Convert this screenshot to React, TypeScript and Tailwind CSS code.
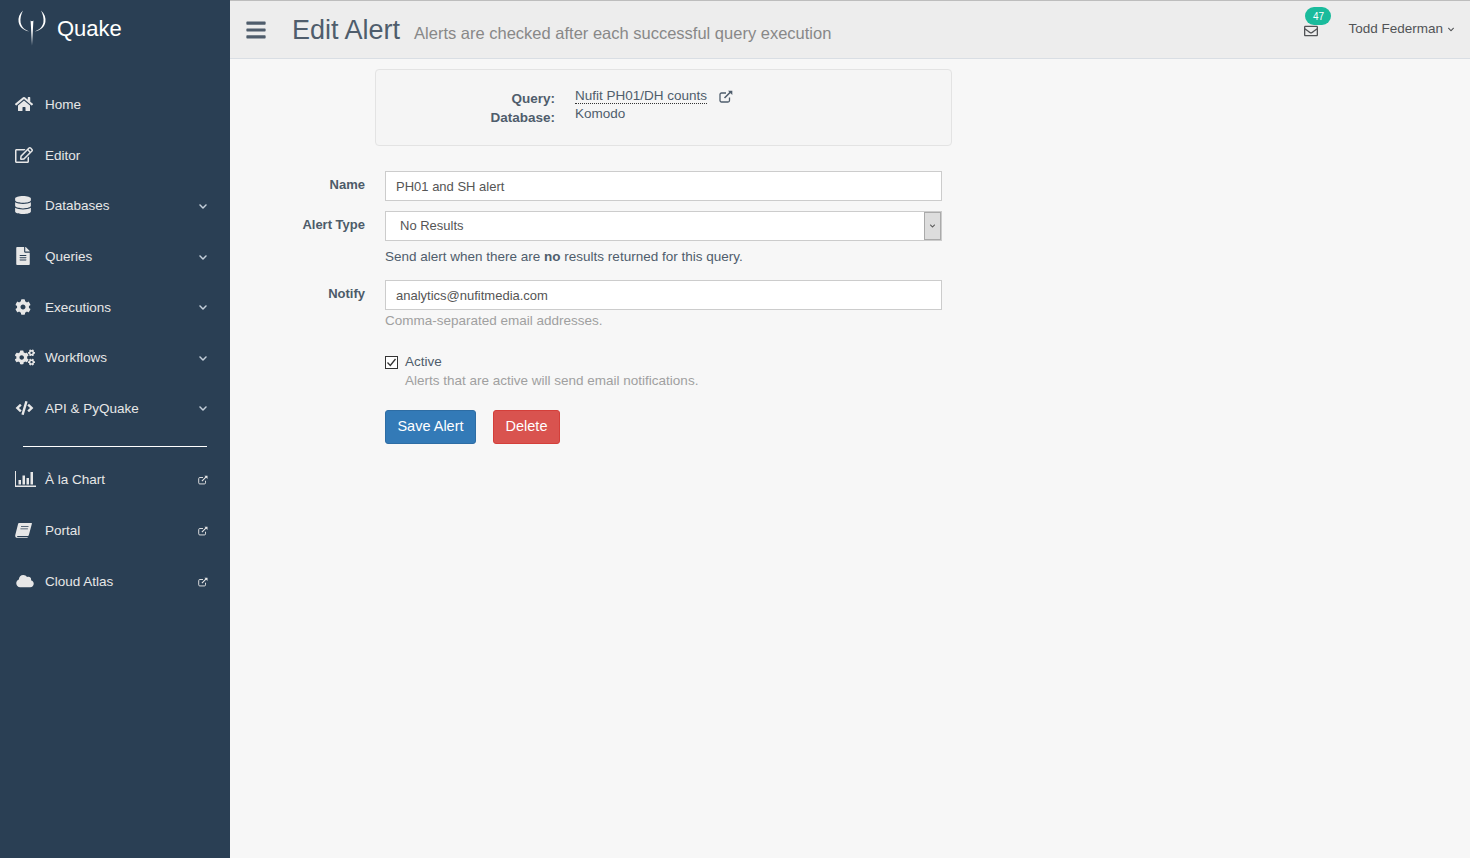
import { ReactNode } from "react";
import {
  FaBars,
  FaChevronDown,
  FaCloud,
  FaCode,
  FaCog,
  FaCogs,
  FaDatabase,
  FaFileAlt,
  FaHome,
  FaRegEdit,
  FaRegEnvelope,
} from "react-icons/fa";

function ExternalIcon({ className }: { className: string }) {
  return (
    <svg viewBox="0 0 14 13" fill="none" stroke="currentColor" className={className}>
      <path d="M10.5 7.5v3a1.5 1.5 0 0 1-1.5 1.5H2.5A1.5 1.5 0 0 1 1 10.5V4.5A1.5 1.5 0 0 1 2.5 3H7" strokeWidth="1.3" />
      <path d="M5.5 8 L12 1.5" strokeWidth="1.6" />
      <path d="M9 .7h4.3V5z" fill="currentColor" stroke="none" />
    </svg>
  );
}

function BarChartIcon() {
  return (
    <svg viewBox="0 0 21 16" className="h-[16px] w-[21px]" fill="currentColor">
      <path d="M0 0h1v14.5h20V16H0z" />
      <path d="M3.5 9h2.5v4.500H3.500zM7.500 4.500h2.500v9H7.500zM11.500 7h2.500v6.500h-2.500zM15.500 1h2.500v12.500h-2.500z" />
    </svg>
  );
}

function BookIcon() {
  return (
    <svg viewBox="0 0 17 15" className="h-[15px] w-[17px]" fill="currentColor">
      <path d="M4 0h12.500c.4 0 .5.300.4.700L13.800 12.300c-.2.600-.6.700-1.200.700H3c-.8 0-1 .5-.8.900.1.300.4.400.8.400h9.800l-.3.700H2.600C1.200 15 .2 14 .2 12.700c0-.4.100-.8.200-1.100L3 1.200C3.200.4 3.500 0 4 0z" />
      <path d="M6 3.200h7.500v.9H6zM5.400 5.400h7.500v.9H5.400z" fill="#2A3F54" />
    </svg>
  );
}

function QuakeLogo() {
  return (
    <svg viewBox="0 0 28 36" className="h-[36px] w-[28px]">
      <path
        d="M5 .5C1.200 4 0 8 .6 12c.8 5 5 8.500 10.500 9.500-4-1.500-7.700-4.500-8.500-9C2 8.500 3 4.500 5 .5zM23 .5c3.800 3.500 5 7.500 4.400 11.500-.8 5-5 8.500-10.500 9.500 4-1.500 7.700-4.500 8.500-9C26 8.500 25 4.500 23 .5z"
        fill="#fff"
      />
      <path d="M12.600 10.500 14 35.500l1.400-25c-.4 1-2.400 1-2.800 0z" fill="#fff" />
    </svg>
  );
}

function NavItem({
  icon,
  label,
  right,
}: {
  icon: ReactNode;
  label: string;
  right?: ReactNode;
}) {
  return (
    <div className="flex h-[50.6px] items-center pl-[15px] pr-[22px] text-[13.5px] text-[#E7E7E7]">
      <span className="flex w-[30px] shrink-0 -translate-y-[1px] items-center">{icon}</span>
      <span className="flex-1">{label}</span>
      {right}
    </div>
  );
}

const chevron = <FaChevronDown className="h-[9px] w-[10px] text-[#C4CFDA]" />;
const external = <ExternalIcon className="h-[10px] w-[10px] text-[#E7E7E7]" />;

function FormRow({ label, children }: { label: string; children: ReactNode }) {
  return (
    <div className="flex">
      <label className="w-[135px] pt-[5px] text-right text-[13px] leading-[18px] font-bold text-[#4d5b69]">
        {label}
      </label>
      <div className="ml-[20px] w-[557px]">{children}</div>
    </div>
  );
}

export default function App() {
  return (
    <div
      className="flex min-h-[858px] bg-[#F7F7F7] text-[#4f5d6c]"
      style={{ fontFamily: '"Liberation Sans", Arial, sans-serif' }}
    >
      <aside className="w-[230px] shrink-0 bg-[#2A3F54] pt-px">
        <div className="flex h-[54px] items-center pl-[18px]">
          <QuakeLogo />
          <span className="ml-[11px] pt-[1px] text-[22px] text-white">Quake</span>
        </div>
        <nav className="pt-[25px]">
          <NavItem icon={<FaHome className="h-[16px] w-[18px]" />} label="Home" />
          <NavItem icon={<FaRegEdit className="h-[16px] w-[18px]" />} label="Editor" />
          <NavItem icon={<FaDatabase className="h-[18px] w-[16px]" />} label="Databases" right={chevron} />
          <NavItem icon={<FaFileAlt className="h-[18px] w-[16px]" />} label="Queries" right={chevron} />
          <NavItem icon={<FaCog className="h-[16px] w-[16px]" />} label="Executions" right={chevron} />
          <NavItem icon={<FaCogs className="h-[17px] w-[20px]" />} label="Workflows" right={chevron} />
          <NavItem icon={<FaCode className="h-[14px] w-[19px]" />} label="API & PyQuake" right={chevron} />
        </nav>
        <div className="mx-[23px] mt-[12px] mb-[8px] h-px bg-white" />
        <nav>
          <NavItem icon={<BarChartIcon />} label="À la Chart" right={external} />
          <NavItem icon={<BookIcon />} label="Portal" right={external} />
          <NavItem icon={<FaCloud className="h-[14px] w-[20px]" />} label="Cloud Atlas" right={external} />
        </nav>
      </aside>

      <div className="min-w-0 flex-1">
        <header className="flex h-[59px] items-center border-t border-b border-t-[#bdbdbd] border-b-[#D9DEE4] bg-[#EDEDED] pl-[14px] pr-[15px]">
          <FaBars className="h-[22px] w-[24px] text-[#4f5d6c]" />
          <h1 className="ml-[24px] text-[27px] leading-[30px] text-[#4f5d6c]">Edit Alert</h1>
          <span className="ml-[14px] pt-[7px] text-[16.5px] text-[#888]">
            Alerts are checked after each successful query execution
          </span>
          <div className="relative ml-auto flex items-center">
            <FaRegEnvelope className="mt-[2px] h-[14px] w-[16px] text-[#515356]" />
            <span className="absolute -top-[12px] left-[2px] flex h-[18px] w-[26px] items-center justify-center rounded-[9px] bg-[#1ABB9C] text-[10px] text-white">
              47
            </span>
            <span className="ml-[29px] text-[13.5px] text-[#515356]">Todd Federman</span>
            <FaChevronDown className="ml-[4px] h-[7px] w-[8px] text-[#515356]" />
          </div>
        </header>

        <main>
          <div className="ml-[145px] mt-[10px] flex h-[77px] w-[577px] rounded-[4px] border border-[#e3e3e3] bg-[#f5f5f5] pt-[19px] text-[13.5px] leading-[19px]">
            <div className="w-[179px] text-right font-bold">
              <div>Query:</div>
              <div>Database:</div>
            </div>
            <div className="ml-[20px]">
              <div className="flex items-center">
                <span className="border-b border-dotted border-[#333] leading-[14px]">Nufit PH01/DH counts</span>
                <ExternalIcon className="ml-[12px] h-[13px] w-[14px]" />
              </div>
              <div>Komodo</div>
            </div>
          </div>

          <form className="mt-[25px]">
            <FormRow label="Name">
              <input
                readOnly
                value="PH01 and SH alert"
                className="h-[30px] w-full border border-[#ccc] bg-white px-[10px] text-[13px] text-[#555] outline-none"
              />
            </FormRow>
            <div className="mt-[10px]">
              <FormRow label="Alert Type">
                <div className="relative">
                  <select className="h-[30px] w-full appearance-none border border-[#ccc] bg-white px-[14px] text-[13px] text-[#555] outline-none">
                    <option>No Results</option>
                  </select>
                  <span className="pointer-events-none absolute top-px right-px flex h-[28px] w-[17px] items-center justify-center border border-[#aaa] bg-[#ddd]">
                    <FaChevronDown className="h-[6px] w-[9px] text-[#555]" />
                  </span>
                </div>
                <p className="mt-[7px] text-[13.5px] leading-[18px]">
                  Send alert when there are <b>no</b> results returned for this query.
                </p>
              </FormRow>
            </div>
            <div className="mt-[14px]">
              <FormRow label="Notify">
                <input
                  readOnly
                  value="analytics@nufitmedia.com"
                  className="h-[30px] w-full border border-[#ccc] bg-white px-[10px] text-[13px] text-[#555] outline-none"
                />
                <p className="mt-[2px] text-[13.5px] leading-[18px] text-[#a0a0a0]">Comma-separated email addresses.</p>
              </FormRow>
            </div>
            <div className="ml-[155px] mt-[23px]">
              <div className="flex h-[18px] items-center">
                <span className="flex h-[13px] w-[13px] items-center justify-center border border-[#333] bg-white">
                  <svg viewBox="0 0 11 11" className="h-[11px] w-[11px]" fill="none" stroke="#333" strokeWidth="1.3">
                    <path d="M1.5 5.5 4.3 8.5 9.5 2" />
                  </svg>
                </span>
                <span className="ml-[7px] text-[13.5px]">Active</span>
              </div>
              <p className="ml-[20px] mt-px text-[13.5px] leading-[18px] text-[#a0a0a0]">
                Alerts that are active will send email notifications.
              </p>
              <div className="mt-[20px] flex gap-[17px]">
                <button type="button" className="h-[34px] w-[91px] rounded-[3px] border border-[#2e6da4] bg-[#337ab7] text-[14.5px] text-white">
                  Save Alert
                </button>
                <button type="button" className="h-[34px] w-[67px] rounded-[3px] border border-[#d43f3a] bg-[#d9534f] text-[14.5px] text-white">
                  Delete
                </button>
              </div>
            </div>
          </form>
        </main>
      </div>
    </div>
  );
}
